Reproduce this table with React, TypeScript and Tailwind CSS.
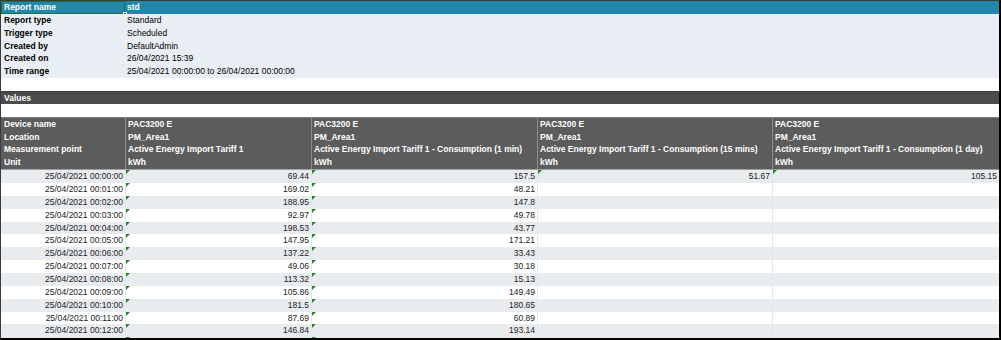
import React from 'react';

const cols = 'grid grid-cols-[124px_186px_226px_235px_227px]';
const row = 'h-[12.86px] leading-[12.86px]';

const info: [string, string][] = [
  ['Report type', 'Standard'],
  ['Trigger type', 'Scheduled'],
  ['Created by', 'DefaultAdmin'],
  ['Created on', '26/04/2021 15:39'],
  ['Time range', '25/04/2021 00:00:00 to 26/04/2021 00:00:00'],
];

const headers: [string, string[]][] = [
  ['Device name', ['PAC3200 E', 'PAC3200 E', 'PAC3200 E', 'PAC3200 E']],
  ['Location', ['PM_Area1', 'PM_Area1', 'PM_Area1', 'PM_Area1']],
  [
    'Measurement point',
    [
      'Active Energy Import Tariff 1',
      'Active Energy Import Tariff 1 - Consumption (1 min)',
      'Active Energy Import Tariff 1 - Consumption (15 mins)',
      'Active Energy Import Tariff 1 - Consumption (1 day)',
    ],
  ],
  ['Unit', ['kWh', 'kWh', 'kWh', 'kWh']],
];

const data: [string, string, string, string, string][] = [
  ['25/04/2021 00:00:00', '69.44', '157.5', '51.67', '105.15'],
  ['25/04/2021 00:01:00', '169.02', '48.21', '', ''],
  ['25/04/2021 00:02:00', '188.95', '147.8', '', ''],
  ['25/04/2021 00:03:00', '92.97', '49.78', '', ''],
  ['25/04/2021 00:04:00', '198.53', '43.77', '', ''],
  ['25/04/2021 00:05:00', '147.95', '171.21', '', ''],
  ['25/04/2021 00:06:00', '137.22', '33.43', '', ''],
  ['25/04/2021 00:07:00', '49.06', '30.18', '', ''],
  ['25/04/2021 00:08:00', '113.32', '15.13', '', ''],
  ['25/04/2021 00:09:00', '105.86', '149.49', '', ''],
  ['25/04/2021 00:10:00', '181.5', '180.65', '', ''],
  ['25/04/2021 00:11:00', '87.69', '60.89', '', ''],
  ['25/04/2021 00:12:00', '146.84', '193.14', '', ''],
];

// green "number stored as text" marker in the top-left corner of a cell
function Flag() {
  return (
    <svg className="absolute left-0 top-0" width="4" height="4" viewBox="0 0 4 4">
      <polygon points="0,0 4,0 0,4" fill="#1f8a1f" />
    </svg>
  );
}

function ValueCell({ value, flag }: { value: string; flag: boolean }) {
  return (
    <div className="relative text-right pr-[2px] border-l border-[#e4e7ea]">
      {flag && <Flag />}
      {value}
    </div>
  );
}

export default function App() {
  return (
    <div
      className="w-[1001px] h-[340px] overflow-hidden bg-white border-l border-t border-[#3a3a3a] border-r-2 border-b-2 border-r-black border-b-black text-[8.5px] text-black"
      style={{ fontFamily: '"Liberation Sans", Arial, sans-serif' }}
    >
      <div className="h-[337px] overflow-hidden">
        {/* report info */}
        <div className={`${cols} ${row} bg-[#2387ab] font-bold text-white`}>
          <div className="relative border-[1.5px] border-[#1e6f45] pl-[2px] leading-[10px]">
            Report name
            <div className="absolute -right-[2.5px] -bottom-[2.5px] w-[3.5px] h-[3.5px] bg-[#1e6f45] border-[0.5px] border-white" />
          </div>
          <div className="col-span-4 pl-[2px]">std</div>
        </div>
        {info.map(([k, v]) => (
          <div key={k} className={`${cols} ${row} bg-[#e8eef3]`}>
            <div className="font-bold pl-[3px]">{k}</div>
            <div className="col-span-4 pl-[2px]">{v}</div>
          </div>
        ))}
        <div className={row} />
        <div className={`${row} bg-[#4b4b4b] text-white font-bold pl-[3px] border-t border-[#3a3a3a]`}>Values</div>
        <div className={row} />

        {/* column headers */}
        <div className="bg-[#5c5c5c] text-white font-bold border-t border-[#7d7d7d] border-b border-b-[#a0a0a0]">
          {headers.map(([label, vals]) => (
            <div key={label} className={`${cols} ${row}`}>
              <div className="pl-[3px]">{label}</div>
              {vals.map((v, i) => (
                <div key={i} className="pl-[2px] border-l border-[#8e8e8e] whitespace-nowrap overflow-hidden">
                  {v}
                </div>
              ))}
            </div>
          ))}
        </div>

        {/* values */}
        {data.map((d, r) => (
          <div key={d[0]} className={`${cols} ${row} text-[#222] ${r % 2 === 0 ? 'bg-[#e9ecef]' : 'bg-white'}`}>
            <div className="text-right pr-[2px]">{d[0]}</div>
            <ValueCell value={d[1]} flag />
            <ValueCell value={d[2]} flag />
            <ValueCell value={d[3]} flag={d[3] !== ''} />
            <ValueCell value={d[4]} flag={d[4] !== ''} />
          </div>
        ))}
        {/* next row, only its top edge shows */}
        <div className={`${cols} ${row} bg-[#e9ecef]`}>
          <div />
          <ValueCell value="" flag />
          <ValueCell value="" flag />
          <ValueCell value="" flag={false} />
          <ValueCell value="" flag={false} />
        </div>
      </div>
    </div>
  );
}
